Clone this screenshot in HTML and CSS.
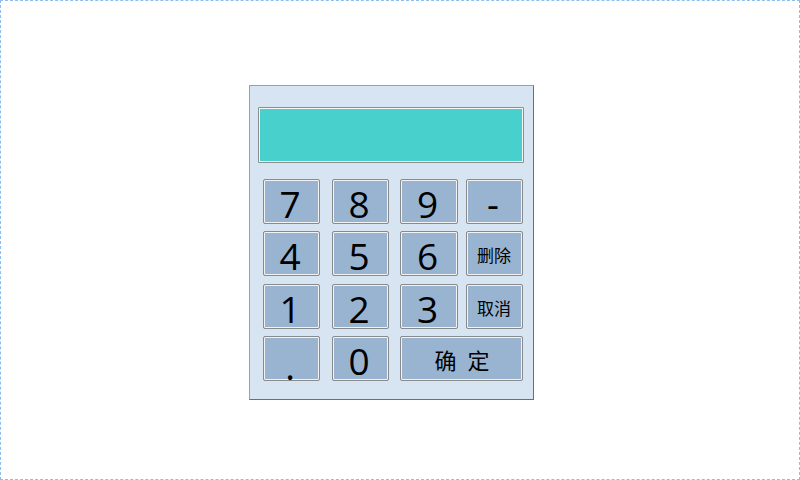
FILE: index.html
```html
<!DOCTYPE html>
<html lang="zh">
<head>
<meta charset="utf-8">
<title>Keypad</title>
<link rel="stylesheet" href="styles.css">
</head>
<body>
<div class="screen">
  <div class="panel">
    <div class="display"></div>
    <div class="keys">
      <button class="key num">7</button>
      <button class="key num">8</button>
      <button class="key num c3">9</button>
      <button class="key num">-</button>
      <button class="key num">4</button>
      <button class="key num">5</button>
      <button class="key num c3">6</button>
      <button class="key cn">删除</button>
      <button class="key num">1</button>
      <button class="key num">2</button>
      <button class="key num c3">3</button>
      <button class="key cn">取消</button>
      <button class="key num dot">.</button>
      <button class="key num">0</button>
      <button class="key ok">确 定</button>
    </div>
  </div>
</div>
</body>
</html>
```
FILE: styles.css
```css
html, body {
  margin: 0;
  padding: 0;
  background: #ffffff;
}

.screen {
  width: 800px;
  height: 480px;
  box-sizing: border-box;
  border: 1px dashed #8cbff0;
  padding: 84px 0 0 248px;
  display: flex;
  align-items: flex-start;
}

.panel {
  width: 285px;
  box-sizing: border-box;
  background: #d7e4f2;
  border: 1px solid #a0a0a0;
  border-right-color: #6e6e6e;
  border-bottom-color: #6e6e6e;
  padding: 21px 9px 18px 8px;
  display: flex;
  flex-direction: column;
}

.display {
  width: 266px;
  height: 56px;
  box-sizing: border-box;
  background: #48d1cc;
  border: 1px solid #8e8e8e;
  box-shadow: inset 0 0 0 1px #f6f6f6;
  border-radius: 1px;
}

.keys {
  margin: 16px 0 0 5px;
  display: grid;
  grid-template-columns: 69px 68px 66px 57px;
  grid-template-rows: 52px 53px 52px 45px;
  align-items: start;
}

.key {
  width: 57px;
  height: 45px;
  box-sizing: border-box;
  margin: 0;
  padding: 0 3px 0 0;
  background: #99b4d1;
  border: 1px solid #8a8a8a;
  border-radius: 2px;
  box-shadow: inset 0 0 0 1px #f2f2f2;
  color: #000;
  display: flex;
  align-items: center;
  justify-content: center;
  font-family: "Open Sans", "Noto Sans", sans-serif;
}

.key.c3 {
  width: 58px;
}

.num {
  font-size: 37px;
  line-height: 1;
  padding-top: 3px;
}

.num.dot {
  align-items: flex-end;
  padding-top: 0;
  padding-bottom: 0;
  line-height: 28px;
}

.cn {
  font-family: "Noto Sans CJK SC", sans-serif;
  font-size: 17px;
  padding: 2px 1px 0 0;
}

.ok {
  grid-column: 3 / span 2;
  width: 123px;
  font-family: "Noto Sans CJK SC", sans-serif;
  font-size: 22px;
  word-spacing: 6px;
  padding: 0 0 0 1px;
}
```
